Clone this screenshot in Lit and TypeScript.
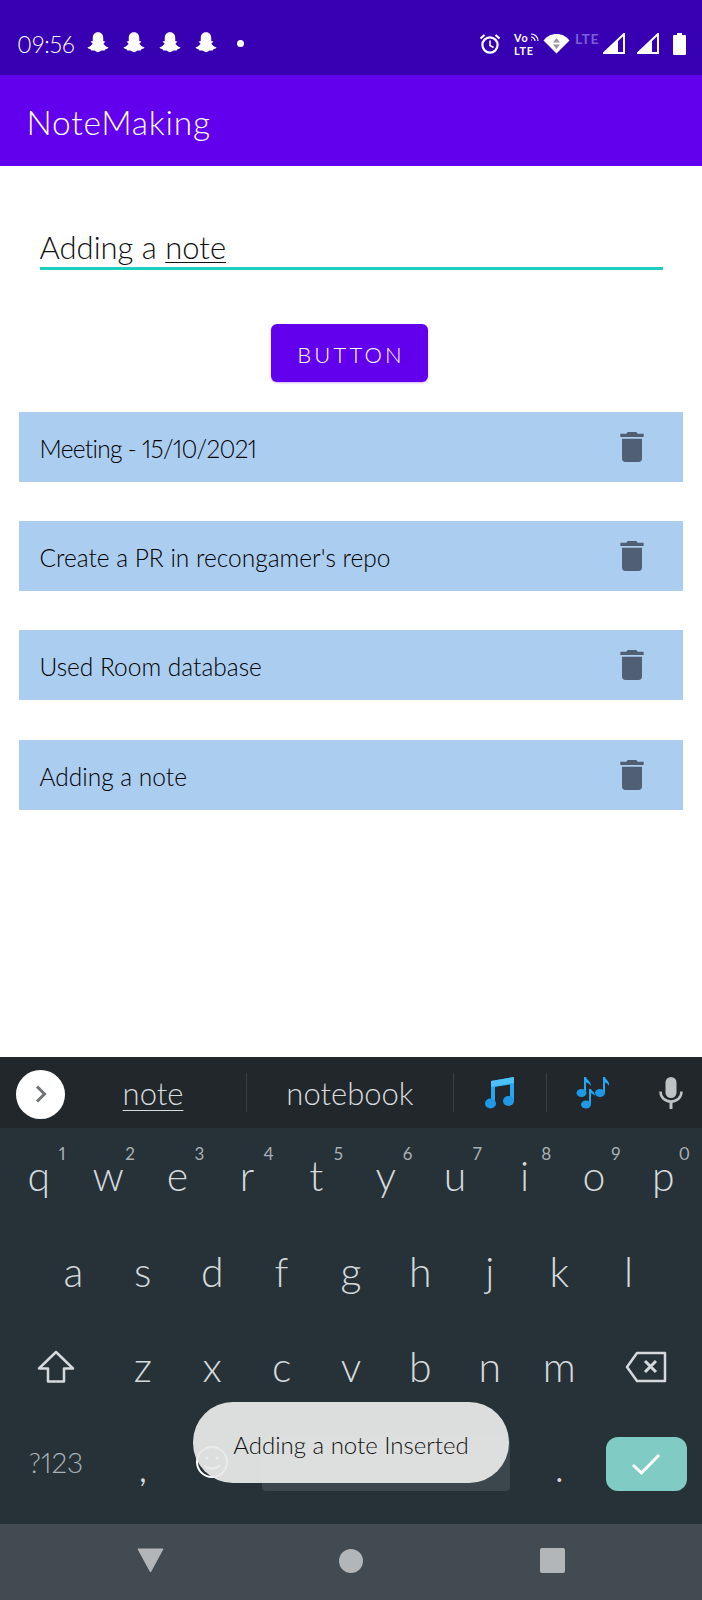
import { LitElement, html, css, svg } from 'lit';
import { customElement } from 'lit/decorators.js';
import { classMap } from 'lit/directives/class-map.js';

const SNAP = svg`<path d="M12 2c-3 0-4.5 2.2-4.5 5v2.5l-2 .5 1.8 1.3c-.6 1.7-2 3-4.3 3.7.2.9 1.5 1.2 2.7 1.4.2.8.3 1.2 1 1.2 1 0 2-.3 3 .4.7.6 1.4 1 2.3 1s1.6-.4 2.3-1c1-.7 2-.4 3-.4.7 0 .8-.4 1-1.2 1.2-.2 2.5-.5 2.7-1.4-2.3-.7-3.7-2-4.3-3.7l1.8-1.3-2-.5V7c0-2.8-1.5-5-4.5-5z" fill="#fff"/>`;

const NOTES = ['Meeting - 15/10/2021', "Create a PR in recongamer's repo", 'Used Room database', 'Adding a note'];

const ROW1 = [['q', '1'], ['w', '2'], ['e', '3'], ['r', '4'], ['t', '5'], ['y', '6'], ['u', '7'], ['i', '8'], ['o', '9'], ['p', '0']];
const ROW2 = ['a', 's', 'd', 'f', 'g', 'h', 'j', 'k', 'l'];
const ROW3 = ['z', 'x', 'c', 'v', 'b', 'n', 'm'];

@customElement('app-root')
export class AppRoot extends LitElement {
  static styles = css`
    :host {
      display: block;
      width: 702px;
      height: 1600px;
      position: relative;
      overflow: hidden;
      background: #fff;
      font-family: 'Lato', 'Noto Sans', sans-serif;
      font-weight: 300;
      font-variant-numeric: proportional-nums;
    }
    .page {
      display: flex;
      flex-direction: column;
      height: 1600px;
    }
    .status {
      height: 75px;
      flex: none;
      background: #3700b3;
      display: flex;
      align-items: center;
      padding: 12px 0 0 17px;
      box-sizing: border-box;
      color: #fff;
    }
    .time {
      font-size: 23px;
      width: 67px;
    }
    .snaps {
      display: flex;
      gap: 8px;
      margin-right: 17px;
    }
    .snaps svg {
      width: 28px;
      height: 28px;
    }
    .dot {
      width: 7px;
      height: 7px;
      border-radius: 50%;
      background: #fff;
    }
    .sys {
      margin-left: auto;
      display: flex;
      align-items: center;
      padding-right: 16px;
    }
    .volte {
      width: 23px;
      margin-left: 13px;
      font-size: 10.800px;
      line-height: 13px;
      letter-spacing: 0.8px;
      font-weight: 700;
      position: relative;
    }
    .volte svg {
      position: absolute;
      right: -2px;
      top: 2px;
    }
    .wifi { margin-left: 6px; }
    .lte {
      width: 26px;
      margin: -10px 2px 0 5px;
      font-size: 14px;
      line-height: 14px;
      font-weight: 700;
      color: #7c5fd4;
      letter-spacing: 0.5px;
    }
    .sig2 { margin-left: 12px; }
    .batt { margin-left: 14px; }
    .appbar {
      height: 91px;
      flex: none;
      background: #6200ee;
      color: #fff;
      display: flex;
      align-items: center;
      padding: 3px 0 0 26.500px;
      box-sizing: border-box;
      font-size: 33.500px;
      letter-spacing: 0.8px;
    }
    .content {
      flex: 1;
      padding: 0 19px;
      min-height: 0;
    }
    .field {
      margin: 61px 20px 0 20.500px;
      border-bottom: 3px solid #1ccfc0;
      font-size: 31px;
      line-height: 40px;
      color: #111;
      height: 40px;
    }
    .field u {
      text-underline-offset: 3px;
      text-decoration-thickness: 1px;
    }
    .btn-wrap {
      display: flex;
      justify-content: center;
      margin: 54px 3px 0 0;
    }
    .btn {
      width: 157px;
      height: 58px;
      background: #6200ee;
      border: none;
      border-radius: 6px;
      color: #fff;
      font: inherit;
      font-size: 22px;
      letter-spacing: 3.200px;
      box-shadow: 0 1px 2px rgba(98, 0, 238, 0.3);
      padding: 2px 0 0 3px;
    }
    .list {
      margin-top: 30px;
      display: flex;
      flex-direction: column;
      gap: 39.200px;
    }
    .row {
      height: 70px;
      background: #abcdf0;
      display: flex;
      align-items: center;
      justify-content: space-between;
      padding: 0 31px 0 20.500px;
      font-size: 24.500px;
      color: #000;
    }
    .row span { padding-top: 3px; }
    .row span.dated { letter-spacing: -0.700px; }
    .row svg {
      width: 40px;
      height: 40px;
      fill: #515f75;
    }
    .strip {
      height: 71px;
      flex: none;
      background: #21272b;
      display: flex;
      align-items: center;
      color: #d8dbdd;
      font-size: 31px;
    }
    .expand {
      width: 49px;
      height: 49px;
      border-radius: 50%;
      background: #fff;
      margin: 3px 1px 0 16px;
      display: flex;
      align-items: center;
      justify-content: center;
    }
    .cell {
      display: flex;
      align-items: center;
      justify-content: center;
    }
    .c-note { width: 180px; padding-right: 6px; box-sizing: border-box; }
    .c-note u {
      text-underline-offset: 5px;
      text-decoration-thickness: 1px;
    }
    .c-book { width: 206px; }
    .c-m1 { width: 92px; }
    .c-m2 { width: 92px; }
    .c-mic { flex: 1; }
    .sep {
      width: 1px;
      height: 39px;
      background: #3a4146;
      flex: none;
    }
    .keys {
      height: 396px;
      flex: none;
      background: #263238;
      box-sizing: border-box;
      padding: 2px 4px 0;
      color: #d5d9dc;
    }
    .krow {
      height: 95.500px;
      display: grid;
      grid-template-columns: repeat(20, 1fr);
    }
    .key {
      grid-column: span 2;
      position: relative;
      display: flex;
      align-items: center;
      justify-content: center;
      font-size: 41px;
      padding-bottom: 4px;
    }
    .wide { grid-column: span 3; }
    .space-key { grid-column: span 8; padding-bottom: 0; }
    .skip { grid-column: span 1; }
    .hint {
      position: absolute;
      top: 13px;
      right: 8px;
      font-size: 17px;
      font-weight: 400;
      color: #a9b0b4;
    }
    .sym {
      font-size: 28px;
      color: #a9b2b7;
    }
    .punct {
      font-size: 30px;
      font-weight: 400;
      padding: 12px 0 0;
    }
    .spacebar {
      width: 248px;
      height: 54px;
      background: #3c464d;
      border-radius: 4px;
    }
    .enter-key {
      padding: 0 11px 0 12px;
    }
    .enter {
      width: 81px;
      height: 54px;
      background: #80cbc4;
      border-radius: 12px;
      display: flex;
      align-items: center;
      justify-content: center;
    }
    .nav {
      height: 76px;
      flex: none;
      background: #434b52;
      display: flex;
      align-items: center;
      padding-bottom: 3px;
      box-sizing: border-box;
    }
    .nav > div {
      display: flex;
      justify-content: center;
    }
    .n1, .n3 { width: 300px; }
    .n2 { width: 102px; }
    .circle {
      width: 24px;
      height: 24px;
      border-radius: 50%;
      background: #b3b6b8;
    }
    .square {
      width: 25px;
      height: 25px;
      border-radius: 2px;
      background: #b3b6b8;
    }
    .toast {
      position: absolute;
      left: 193px;
      top: 1402px;
      width: 316px;
      height: 81px;
      padding-top: 3px;
      box-sizing: border-box;
      border-radius: 40px;
      background: rgba(232, 233, 232, 0.94);
      color: #111;
      font-size: 24px;
      display: flex;
      align-items: center;
      justify-content: center;
    }
  `;

  render() {
    return html`
      <div class="page">
        <div class="status">
          <span class="time">09:56</span>
          <div class="snaps">
            ${[0, 1, 2, 3].map(() => html`<svg viewBox="0 0 24 24">${SNAP}</svg>`)}
          </div>
          <span class="dot"></span>
          <div class="sys">
            <svg width="22" height="22" viewBox="0 0 22 22" fill="none" stroke="#fff">
              <circle cx="11" cy="12" r="7.600" stroke-width="2.200"/>
              <path d="M11 7.500V12.500L14.500 14.500" stroke-width="1.600"/>
              <path d="M1.500 5.500L5.500 2M20.500 5.500L16.500 2" stroke-width="2.200"/>
            </svg>
            <div class="volte">
              Vo<br />LTE
              <svg width="9" height="9" viewBox="0 0 9 9" fill="none" stroke="#fff" stroke-width="1.200">
                <path d="M1 1c4 0 7 3 7 7M1 4c2 0 4 2 4 4M1 7h1"/>
              </svg>
            </div>
            <svg class="wifi" width="27" height="21" viewBox="0 0 27 21">
              <path d="M13.500 20.500L.5 7.500C4 3 8.500 1 13.500 1s9.500 2 13 6.500z" fill="#fff"/>
              <path d="M13.500 5l-3.500 4.500h7zM13.500 16l3.500-4.500h-7z" fill="#9b94a8"/>
            </svg>
            <span class="lte">LTE</span>
            <svg width="22" height="21" viewBox="0 0 22 21">
              <path d="M21 1V20H1z" fill="none" stroke="#fff" stroke-width="2"/>
              <path d="M15 7V20H2z" fill="#fff"/>
            </svg>
            <svg class="sig2" width="22" height="21" viewBox="0 0 22 21">
              <path d="M21 1V20H1z" fill="none" stroke="#fff" stroke-width="2"/>
              <path d="M15 7V20H2z" fill="#fff"/>
            </svg>
            <svg class="batt" width="13" height="22" viewBox="0 0 13 22">
              <path d="M4 0h5v2h3a1 1 0 0 1 1 1v18a1 1 0 0 1-1 1H1a1 1 0 0 1-1-1V3a1 1 0 0 1 1-1h3z" fill="#fff"/>
            </svg>
          </div>
        </div>
        <div class="appbar">NoteMaking</div>
        <div class="content">
          <div class="field">Adding a <u>note</u></div>
          <div class="btn-wrap"><button class="btn">BUTTON</button></div>
          <div class="list">
            ${NOTES.map(
              (n) => html`
                <div class="row">
                  <span class=${classMap({ dated: /\d/.test(n) })}>${n}</span>
                  <svg viewBox="0 0 24 24">
                    <path d="M6 19c0 1.100.9 2 2 2h8c1.100 0 2-.9 2-2V7H6v12zM19 4h-3.500l-1-1h-5l-1 1H5v2h14V4z"/>
                  </svg>
                </div>
              `
            )}
          </div>
        </div>
        <div class="strip">
          <div class="expand">
            <svg width="14" height="20" viewBox="0 0 14 20" fill="none" stroke="#707375" stroke-width="3">
              <path d="M3 2.500L10.500 10 3 17.500"/>
            </svg>
          </div>
          <div class="cell c-note"><u>note</u></div>
          <div class="sep"></div>
          <div class="cell c-book">notebook</div>
          <div class="sep"></div>
          <div class="cell c-m1">
            <svg width="30" height="33" viewBox="0 0 30 33">
              <path d="M6 5L29 1V25h-4V8.500L10 11V28H6z" fill="#27a7f2"/>
              <path d="M6 5L29 1V7L6 11z" fill="#4cc0f7"/>
              <ellipse cx="5.500" cy="27.500" rx="5.500" ry="5" fill="#1f98e6"/>
              <ellipse cx="23.500" cy="25" rx="5.500" ry="5" fill="#1f98e6"/>
            </svg>
          </div>
          <div class="sep"></div>
          <div class="cell c-m2">
            <svg width="34" height="33" viewBox="0 0 34 33">
              <g fill="#27a7f2">
                <path d="M8 1h2c.5 3 5 4 5 9-1-2-3-3-5-3.500V17H8z"/>
                <path d="M13 13h2c.5 2 4 3 4 7-1-1.500-2.500-2.500-4-2.800V28h-2z"/>
                <path d="M27 1h2c.5 3 5 4 4 9-1-2-2-3-4-3.500V17h-2z"/>
              </g>
              <g fill="#1f98e6">
                <ellipse cx="5.500" cy="17" rx="5" ry="4"/>
                <ellipse cx="10" cy="28.500" rx="5" ry="4"/>
                <ellipse cx="24" cy="17" rx="5" ry="4"/>
              </g>
            </svg>
          </div>
          <div class="cell c-mic">
            <svg width="24" height="32" viewBox="0 0 24 32">
              <rect x="6.500" y="0" width="11" height="21" rx="5.500" fill="#c0c3c5"/>
              <path d="M1.500 14.500c0 6 4.500 10 10.500 10s10.500-4 10.500-10" fill="none" stroke="#c0c3c5" stroke-width="2.500"/>
              <path d="M12 24v8" stroke="#c0c3c5" stroke-width="3"/>
            </svg>
          </div>
        </div>
        <div class="keys">
          <div class="krow">
            ${ROW1.map(([k, h]) => html`<div class="key">${k}<span class="hint">${h}</span></div>`)}
          </div>
          <div class="krow">
            <div class="skip"></div>
            ${ROW2.map((k) => html`<div class="key">${k}</div>`)}
          </div>
          <div class="krow">
            <div class="key wide">
              <svg width="38" height="34" viewBox="0 0 38 34" fill="none" stroke="#d5d9dc" stroke-width="2.500" stroke-linejoin="round">
                <path d="M19 2L2 18.500H11V31.500H27V18.500H36z"/>
              </svg>
            </div>
            ${ROW3.map((k) => html`<div class="key">${k}</div>`)}
            <div class="key wide">
              <svg width="42" height="32" viewBox="0 0 42 32" fill="none" stroke="#d5d9dc" stroke-width="2.500" stroke-linejoin="round">
                <path d="M12 2H40V30H12L2 16z"/>
                <path d="M20 10L31 21M31 10L20 21" stroke-width="3"/>
              </svg>
            </div>
          </div>
          <div class="krow">
            <div class="key wide sym">?123</div>
            <div class="key punct">,</div>
            <div class="key">
              <svg width="34" height="34" viewBox="0 0 34 34" fill="none" stroke="#fff" stroke-width="2">
                <circle cx="17" cy="17" r="15"/>
                <circle cx="12" cy="13" r="1.500" fill="#fff" stroke="none"/>
                <circle cx="22" cy="13" r="1.500" fill="#fff" stroke="none"/>
                <path d="M9.500 20c2 4.500 13 4.500 15 0"/>
              </svg>
            </div>
            <div class="key space-key"><div class="spacebar"></div></div>
            <div class="key punct">.</div>
            <div class="key wide enter-key">
              <div class="enter">
                <svg width="30" height="24" viewBox="0 0 30 24" fill="none" stroke="#fff" stroke-width="3">
                  <path d="M2 13L10.500 21 28 3"/>
                </svg>
              </div>
            </div>
          </div>
        </div>
        <div class="nav">
          <div class="n1">
            <svg width="27" height="25" viewBox="0 0 27 25"><path d="M1 1H26L13.500 24z" fill="#b3b6b8" stroke="#b3b6b8" stroke-linejoin="round"/></svg>
          </div>
          <div class="n2"><span class="circle"></span></div>
          <div class="n3"><span class="square"></span></div>
        </div>
      </div>
      <div class="toast">Adding a note Inserted</div>
    `;
  }
}

declare global {
  interface HTMLElementTagNameMap {
    'app-root': AppRoot;
  }
}
